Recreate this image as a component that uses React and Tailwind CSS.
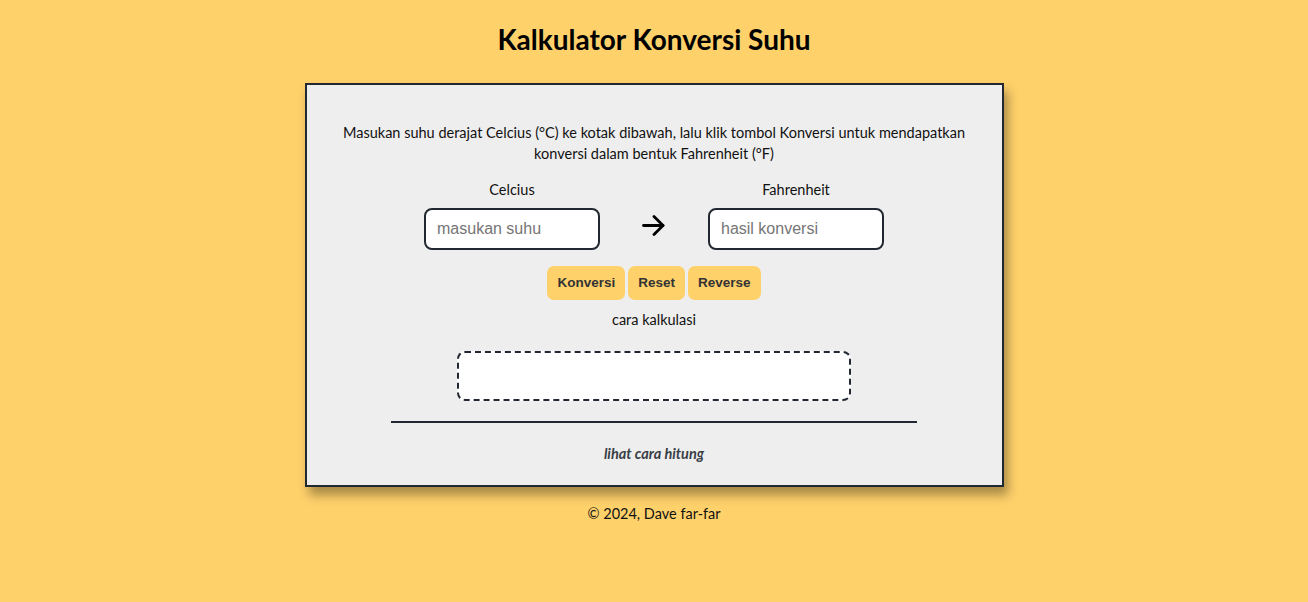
export default function App() {
  return (
    <div
      className="min-h-[602px] w-full bg-[#ffd16b] text-[#111] flex flex-col items-center"
      style={{ fontFamily: "Lato, 'Noto Sans', sans-serif" }}
    >
      <h1 className="mt-[21px] text-[28px] leading-[36px] font-bold text-black">
        Kalkulator Konversi Suhu
      </h1>

      <main className="mt-[26px] w-[699px] border-2 border-[#222831] bg-[#eeeeee] shadow-[4px_8px_10px_rgba(0,0,0,0.35)] flex flex-col items-center pt-[37px] pb-[22px]">
        <p className="w-[640px] text-center text-[14.5px] leading-[21px]">
          Masukan suhu derajat Celcius (°C) ke kotak dibawah, lalu klik tombol Konversi untuk mendapatkan
          konversi dalam bentuk Fahrenheit (°F)
        </p>

        <div className="mt-[17px] flex items-end gap-[42px]">
          <div className="flex flex-col items-center gap-[9px]">
            <label className="text-[14.5px] leading-[18px]">Celcius</label>
            <input
              placeholder="masukan suhu"
              className="w-[176px] h-[42px] rounded-[8px] border-2 border-[#222831] bg-white px-[11px] text-[16px] placeholder:text-[#757575] outline-none"
              style={{ fontFamily: "'Liberation Sans', Arial, sans-serif" }}
            />
          </div>
          <div className="h-[42px] pb-[8px] flex items-center">
            {/* arrow */}
            <svg width="24" height="21" viewBox="0 0 24 21" fill="none" stroke="#000" strokeWidth="2.8" strokeLinecap="round" strokeLinejoin="round">
              <path d="M1.5 10.5H21" />
              <path d="M12 1.5L21 10.5L12 19.5" />
            </svg>
          </div>
          <div className="flex flex-col items-center gap-[9px]">
            <label className="text-[14.5px] leading-[18px]">Fahrenheit</label>
            <input
              placeholder="hasil konversi"
              className="w-[176px] h-[42px] rounded-[8px] border-2 border-[#222831] bg-white px-[11px] text-[16px] placeholder:text-[#757575] outline-none"
              style={{ fontFamily: "'Liberation Sans', Arial, sans-serif" }}
            />
          </div>
        </div>

        <div
          className="mt-[16px] flex gap-[3px] text-[13.5px] font-bold text-[#333]"
          style={{ fontFamily: "'Liberation Sans', Arial, sans-serif" }}
        >
          <button className="h-[34px] px-[10px] rounded-[7px] bg-[#ffd16b]">Konversi</button>
          <button className="h-[34px] px-[10px] rounded-[7px] bg-[#ffd16b]">Reset</button>
          <button className="h-[34px] px-[10px] rounded-[7px] bg-[#ffd16b]">Reverse</button>
        </div>

        <p className="mt-[11px] text-[14.5px] leading-[18px]">cara kalkulasi</p>

        <div className="mt-[22px] w-[394px] h-[50px] rounded-[8px] border-2 border-dashed border-[#222831] bg-white" />

        <hr className="mt-[20px] w-[526px] border-t-2 border-[#222831]" />

        <p className="mt-[22px] text-[14.5px] leading-[18px] font-bold italic text-[#393e46]">
          lihat cara hitung
        </p>
      </main>

      <footer className="mt-[17px] text-[14.5px] leading-[20px]">© 2024, Dave far-far</footer>
    </div>
  );
}
